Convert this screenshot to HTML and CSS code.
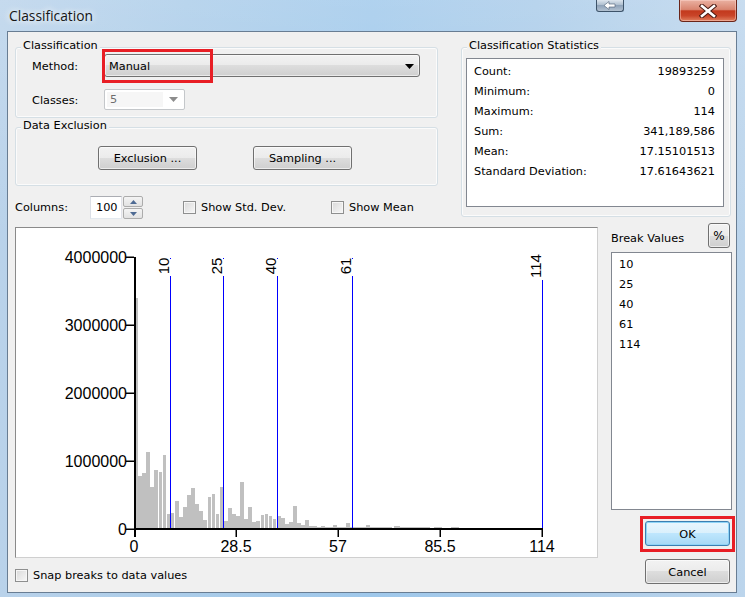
FILE: index.html
```html
<!DOCTYPE html>
<html>
<head>
<meta charset="utf-8">
<title>Classification</title>
<link rel="stylesheet" href="styles.css">
</head>
<body>
<div class="window">
  <div class="titlebar">
    <span class="title">Classification</span>
    <div class="caption-btns">
      <div class="back-btn">
        <svg width="14" height="9" viewBox="0 0 14 9"><path d="M1 4.5 L6 0.5 V3 H12 V6 H6 V8.5 Z" fill="#fff" stroke="#4a5d72" stroke-width="0.6"/></svg>
      </div>
      <div class="close-btn">
        <svg width="18" height="14" viewBox="0 0 18 14">
          <path d="M3 2 L15 12 M15 2 L3 12" stroke="#4a1a12" stroke-width="4.6" stroke-linecap="square"/>
          <path d="M3 2 L15 12 M15 2 L3 12" stroke="#ffffff" stroke-width="2.6" stroke-linecap="square"/>
        </svg>
      </div>
    </div>
  </div>

  <div class="client">
    <div class="top">
      <div class="left">
        <div class="group g-class">
          <div class="group-title">Classification</div>
          <div class="form-grid">
            <span>Method:</span>
            <div class="combo method">
              <span>Manual</span>
              <svg width="9" height="5" viewBox="0 0 9 5"><path d="M0 0 H9 L4.5 5 Z" fill="#000"/></svg>
              <div class="hl hl-method"></div>
            </div>
            <span>Classes:</span>
            <div class="combo disabled">
              <span class="field">5</span>
              <svg class="dis-arrow" width="9" height="5" viewBox="0 0 9 5"><path d="M0 0 H9 L4.5 5 Z" fill="#8c8c8c"/></svg>
            </div>
          </div>
        </div>
        <div class="group g-excl">
          <div class="group-title">Data Exclusion</div>
          <div class="btn-row">
            <button class="btn">Exclusion ...</button>
            <button class="btn">Sampling ...</button>
          </div>
        </div>
        <div class="columns-row">
          <span class="col-lbl">Columns:</span>
          <div class="spin">
            <span class="spin-val">100</span>
            <div class="spin-btns">
              <div class="sb"><svg width="7" height="4" viewBox="0 0 7 4"><path d="M0 4 L3.5 0 L7 4 Z" fill="#4e6a93"/></svg></div>
              <div class="sb"><svg width="7" height="4" viewBox="0 0 7 4"><path d="M0 0 L3.5 4 L7 0 Z" fill="#4e6a93"/></svg></div>
            </div>
          </div>
          <label class="check chk-std"><span class="box"></span>Show Std. Dev.</label>
          <label class="check"><span class="box"></span>Show Mean</label>
        </div>
      </div>

      <div class="group g-stats">
        <div class="group-title">Classification Statistics</div>
        <div class="stats-box">
          <div class="srow"><span>Count:</span><span>19893259</span></div>
          <div class="srow"><span>Minimum:</span><span>0</span></div>
          <div class="srow"><span>Maximum:</span><span>114</span></div>
          <div class="srow"><span>Sum:</span><span>341,189,586</span></div>
          <div class="srow"><span>Mean:</span><span>17.15101513</span></div>
          <div class="srow"><span>Standard Deviation:</span><span>17.61643621</span></div>
        </div>
      </div>
    </div>

    <div class="main">
      <div class="chart-col">
        <div class="chart">
          <svg width="581" height="329" viewBox="16 228 581 329" class="chart-svg">
            <g fill="#c0c0c0">
              <rect x="135" y="298" width="3" height="230"/>
              <rect x="138" y="476" width="4" height="52"/>
              <rect x="142" y="473" width="4" height="55"/>
              <rect x="146" y="452" width="4" height="76"/>
              <rect x="150" y="487" width="4" height="41"/>
              <rect x="154" y="470" width="4" height="58"/>
              <rect x="159" y="472" width="3" height="56"/>
              <rect x="163" y="455" width="3" height="73"/>
              <rect x="167" y="514" width="3" height="14"/>
              <rect x="171" y="513" width="3" height="15"/>
              <rect x="175" y="501" width="4" height="27"/>
              <rect x="179" y="517" width="4" height="11"/>
              <rect x="183" y="507" width="4" height="21"/>
              <rect x="187" y="495" width="4" height="33"/>
              <rect x="191" y="488" width="4" height="40"/>
              <rect x="195" y="504" width="4" height="24"/>
              <rect x="199" y="511" width="4" height="17"/>
              <rect x="203" y="520" width="4" height="8"/>
              <rect x="208" y="497" width="3" height="31"/>
              <rect x="212" y="494" width="3" height="34"/>
              <rect x="216" y="514" width="3" height="14"/>
              <rect x="220" y="487" width="3" height="41"/>
              <rect x="224" y="521" width="4" height="7"/>
              <rect x="228" y="508" width="4" height="20"/>
              <rect x="232" y="514" width="4" height="14"/>
              <rect x="236" y="516" width="4" height="12"/>
              <rect x="240" y="482" width="4" height="46"/>
              <rect x="244" y="519" width="4" height="9"/>
              <rect x="248" y="507" width="4" height="21"/>
              <rect x="252" y="522" width="4" height="6"/>
              <rect x="256" y="521" width="4" height="7"/>
              <rect x="261" y="515" width="3" height="13"/>
              <rect x="265" y="514" width="3" height="14"/>
              <rect x="269" y="516" width="3" height="12"/>
              <rect x="273" y="519" width="3" height="9"/>
              <rect x="277" y="516" width="4" height="12"/>
              <rect x="281" y="518" width="4" height="10"/>
              <rect x="285" y="524" width="4" height="4"/>
              <rect x="289" y="522" width="4" height="6"/>
              <rect x="293" y="506" width="4" height="22"/>
              <rect x="297" y="523" width="4" height="5"/>
              <rect x="301" y="525" width="4" height="3"/>
              <rect x="305" y="520" width="4" height="8"/>
              <rect x="309" y="526" width="4" height="2"/>
              <rect x="313" y="526" width="4" height="2"/>
              <rect x="317" y="527" width="4" height="1"/>
              <rect x="321" y="526" width="4" height="2"/>
              <rect x="325" y="527" width="4" height="1"/>
              <rect x="329" y="527" width="4" height="1"/>
              <rect x="333" y="525" width="4" height="3"/>
              <rect x="337" y="527" width="4" height="1"/>
              <rect x="341" y="527" width="5" height="1"/>
              <rect x="346" y="523" width="4" height="5"/>
              <rect x="350" y="527" width="4" height="1"/>
              <rect x="354" y="527" width="4" height="1"/>
              <rect x="358" y="527" width="4" height="1"/>
              <rect x="362" y="527" width="4" height="1"/>
              <rect x="366" y="525" width="4" height="3"/>
              <rect x="370" y="527" width="22" height="1"/>
              <rect x="394" y="526" width="6" height="2"/>
              <rect x="400" y="527" width="30" height="1"/>
              <rect x="434" y="527" width="8" height="1"/>
              <rect x="451" y="527" width="8" height="1"/>
            </g>
            <g fill="#000">
              <rect x="134" y="257" width="2" height="273"/>
              <rect x="134" y="528" width="409" height="2"/>
              <rect x="126" y="256.5" width="8" height="1.5"/>
              <rect x="126" y="324.5" width="8" height="1.5"/>
              <rect x="126" y="392.5" width="8" height="1.5"/>
              <rect x="126" y="460.5" width="8" height="1.5"/>
              <rect x="126" y="528.5" width="8" height="1.5"/>
              <rect x="235.5" y="529" width="1.5" height="8"/>
              <rect x="337.5" y="529" width="1.5" height="8"/>
              <rect x="439.5" y="529" width="1.5" height="8"/>
              <rect x="541.5" y="529" width="1.5" height="8"/>
              <rect x="134" y="529" width="2" height="8"/>
            </g>
            <g class="axis-lbl" text-anchor="end">
              <text x="127" y="263">4000000</text>
              <text x="127" y="331">3000000</text>
              <text x="127" y="399">2000000</text>
              <text x="127" y="467">1000000</text>
              <text x="127" y="535">0</text>
            </g>
            <g class="axis-lbl" text-anchor="middle">
              <text x="134" y="552">0</text>
              <text x="236" y="552">28.5</text>
              <text x="338" y="552">57</text>
              <text x="440" y="552">85.5</text>
              <text x="542" y="552">114</text>
            </g>
            <g fill="#0000ff">
              <rect x="170" y="276" width="1" height="252"/>
              <rect x="223" y="276" width="1" height="252"/>
              <rect x="277" y="276" width="1" height="252"/>
              <rect x="352" y="276" width="1" height="252"/>
              <rect x="542" y="280" width="1" height="248"/>
              <rect x="170" y="258" width="1" height="1"/>
              <rect x="223" y="258" width="1" height="1"/>
              <rect x="277" y="258" width="1" height="1"/>
              <rect x="352" y="258" width="1" height="1"/>
            </g>
            <g class="break-lbl" text-anchor="middle">
              <text x="168.5" y="266" transform="rotate(-90 168.5 266)">10</text>
              <text x="221.5" y="266" transform="rotate(-90 221.5 266)">25</text>
              <text x="275.5" y="266" transform="rotate(-90 275.5 266)">40</text>
              <text x="350.5" y="266" transform="rotate(-90 350.5 266)">61</text>
              <text x="540.5" y="266" transform="rotate(-90 540.5 266)">114</text>
            </g>
          </svg>
        </div>
        <label class="check snap"><span class="box"></span>Snap breaks to data values</label>
      </div>

      <div class="side-col">
        <div class="bv-head">
          <span class="bv-lbl">Break Values</span>
          <button class="btn pct">%</button>
        </div>
        <div class="bv-list">
          <div>10</div>
          <div>25</div>
          <div>40</div>
          <div>61</div>
          <div>114</div>
        </div>
        <div class="btn-stack">
          <div class="ok-wrap">
            <button class="btn ok">OK</button>
            <div class="hl hl-ok"></div>
          </div>
          <button class="btn cancel">Cancel</button>
        </div>
      </div>
    </div>
  </div>
</div>
</body>
</html>
```

FILE: styles.css
```css
* {
  box-sizing: border-box;
}

html, body {
  margin: 0;
  padding: 0;
}

body {
  width: 745px;
  height: 597px;
  overflow: hidden;
  font-family: "DejaVu Sans", "Liberation Sans", sans-serif;
  font-size: 11.3px;
  color: #000;
}

.window {
  width: 745px;
  height: 597px;
  display: flex;
  flex-direction: column;
  background:
    linear-gradient(180deg, rgba(255,255,255,0.18) 0%, rgba(255,255,255,0) 40%),
    linear-gradient(90deg, #b9d2ea 0%, #aacce9 25%, #9fc8eb 50%, #a9cbe9 72%, #bcd5ec 100%);
}

/* ---------- title bar ---------- */
.titlebar {
  flex: none;
  height: 31px;
  display: flex;
  align-items: flex-start;
}

.title {
  font-family: "Open Sans", sans-serif;
  font-size: 13.8px;
  line-height: 32px;
  padding-left: 9px;
  color: #151515;
  text-shadow: 0 0 6px #fff, 0 0 10px rgba(255,255,255,0.8);
}

.caption-btns {
  margin-left: auto;
  display: flex;
  align-items: flex-start;
  gap: 55px;
  padding-right: 8px;
}

.back-btn {
  width: 28px;
  height: 12px;
  border: 1px solid #3d5369;
  border-top: none;
  border-radius: 0 0 3px 3px;
  background: linear-gradient(#dce5ee, #a9bacb 50%, #8fa3b9 50%, #b3c2d2);
  display: flex;
  align-items: center;
  justify-content: center;
}

.close-btn {
  width: 58px;
  height: 22px;
  border: 1px solid #6a2519;
  border-top: none;
  border-radius: 0 0 4px 4px;
  background: linear-gradient(#eab1a2, #d98570 45%, #c3391d 52%, #c94529 75%, #e0805f);
  box-shadow: inset 0 0 0 1px rgba(255,220,210,0.45);
  display: flex;
  align-items: center;
  justify-content: center;
}

/* ---------- client ---------- */
.client {
  margin: 0 8px 0 7px;
  height: 562px;
  border: 1px solid #687d93;
  background: #f0f0f0;
}

.top {
  display: flex;
  justify-content: space-between;
  align-items: flex-start;
  padding: 15px 4px 0 7px;
}

.left {
  width: 423px;
}

.group {
  border: 1px solid #d5dfe5;
  border-radius: 3px;
  box-shadow: inset 0 0 0 1px #fbfbfb;
}

.group-title {
  margin: -9px 0 0 5px;
  padding: 0 2px;
  width: max-content;
  line-height: 14px;
  background: #f0f0f0;
}

.g-class {
  height: 71px;
}

.form-grid {
  display: grid;
  grid-template-columns: 72px 316px;
  grid-template-rows: 23px 21px;
  row-gap: 12px;
  align-items: center;
  margin-top: 1px;
  padding-left: 16px;
}

.form-grid > span {
  padding-top: 1px;
}

.combo {
  position: relative;
  height: 23px;
  border: 1px solid #707070;
  border-radius: 3px;
  background: linear-gradient(#f2f2f2, #ebebeb 50%, #dddddd 50%, #cfcfcf);
  box-shadow: inset 0 0 0 1px rgba(255,255,255,0.55);
  display: flex;
  align-items: center;
  justify-content: space-between;
  padding: 1px 5px 0 4px;
}

.combo.disabled {
  width: 81px;
  height: 21px;
  border: 1px solid #c4c7ca;
  border-radius: 2px;
  background: #fff;
  box-shadow: none;
  padding: 2px 6px 2px 2px;
}

.combo .field {
  width: 56px;
  height: 100%;
  background: #f6f6f6;
  color: #6d6d6d;
  padding-left: 3px;
  line-height: 16px;
}

.hl {
  position: absolute;
  border: 3px solid #e81e25;
  pointer-events: none;
}

.hl-method {
  left: -3px;
  top: -6px;
  width: 111px;
  height: 34px;
}

.g-excl {
  height: 59px;
  margin-top: 9px;
}

.btn-row {
  display: flex;
  gap: 56px;
  padding-left: 82px;
  margin-top: 13px;
}

.btn {
  font: inherit;
  color: #000;
  width: 99px;
  height: 24px;
  padding: 1px 0 0;
  border: 1px solid #707070;
  border-radius: 3px;
  background: linear-gradient(#f2f2f2, #ebebeb 50%, #dddddd 50%, #cfcfcf);
  box-shadow: inset 0 0 0 1px rgba(255,255,255,0.6);
}

/* columns row */
.columns-row {
  margin-top: 10px;
  height: 23px;
  display: flex;
  align-items: center;
}

.col-lbl {
  width: 75px;
}

.spin {
  width: 53px;
  height: 23px;
  display: flex;
  gap: 1px;
}

.spin-val {
  width: 32px;
  height: 23px;
  border: 1px solid;
  border-color: #abadb3 #e2e3ea #e3e9ef #dbdfe6;
  background: #fff;
  padding-left: 5px;
  line-height: 21px;
}

.spin-btns {
  width: 20px;
  display: flex;
  flex-direction: column;
  gap: 1px;
}

.sb {
  flex: 1;
  border: 1px solid #acacac;
  border-radius: 2px;
  background: linear-gradient(#f4f4f4, #e2e2e2);
  display: flex;
  align-items: center;
  justify-content: center;
}

.check {
  display: flex;
  align-items: center;
  gap: 5px;
  white-space: nowrap;
}

.box {
  width: 13px;
  height: 13px;
  flex: none;
  border: 1px solid #8e8f8f;
  background: linear-gradient(135deg, #d9d9d9, #f7f7f7);
  box-shadow: inset 0 0 0 1px #f6f6f6;
}

.chk-std {
  margin-left: 40px;
  width: 148px;
}

/* stats */
.g-stats {
  width: 270px;
  height: 170px;
  margin-right: 1px;
}

.stats-box {
  margin: 5px 6px 0 4px;
  height: 149px;
  border: 1px solid #828790;
  background: #fff;
  padding: 3px 8px 0 7px;
}

.srow {
  display: flex;
  justify-content: space-between;
  line-height: 20px;
}

/* ---------- main ---------- */
.main {
  display: flex;
  justify-content: space-between;
  padding: 0 4px 0 7px;
}

.chart-col {
  width: 583px;
}

.chart {
  margin-top: 8px;
  height: 331px;
  border: 1px solid;
  border-color: #8a8a8a #cfcfcf #cfcfcf #8a8a8a;
  background: #fff;
}

.chart-svg {
  display: block;
}

.axis-lbl {
  font-family: "Liberation Sans", Arial, sans-serif;
  font-size: 16px;
  fill: #000;
}

.break-lbl {
  font-family: "Liberation Sans", Arial, sans-serif;
  font-size: 15px;
  fill: #000;
}

.snap {
  margin-top: 11px;
}

.side-col {
  width: 121px;
}

.bv-head {
  margin-top: 4px;
  height: 25px;
  display: flex;
  justify-content: space-between;
  align-items: center;
}

.bv-lbl {
  margin-top: 5px;
}

.btn.pct {
  width: 22px;
  height: 25px;
  margin-right: 2px;
  font-size: 12px;
}

.bv-list {
  margin-top: 4px;
  height: 258px;
  border: 1px solid #828790;
  background: #fff;
  padding: 2px 0 0 7px;
  line-height: 20px;
}

.btn-stack {
  display: flex;
  flex-direction: column;
  align-items: flex-end;
  padding-right: 2px;
}

.ok-wrap {
  position: relative;
  margin-top: 11px;
  width: 85px;
  height: 25px;
}

.btn.ok {
  width: 85px;
  height: 25px;
  border-color: #3c7fb1;
  background: linear-gradient(#eaf6fd, #d9f0fc 50%, #bee6fd 50%, #a7d9f5);
  box-shadow: inset 0 0 0 1px #8fd4f6;
}

.hl-ok {
  left: -5px;
  top: -5px;
  right: -5px;
  bottom: -6px;
}

.btn.cancel {
  margin-top: 13px;
  width: 85px;
  height: 25px;
}
```
